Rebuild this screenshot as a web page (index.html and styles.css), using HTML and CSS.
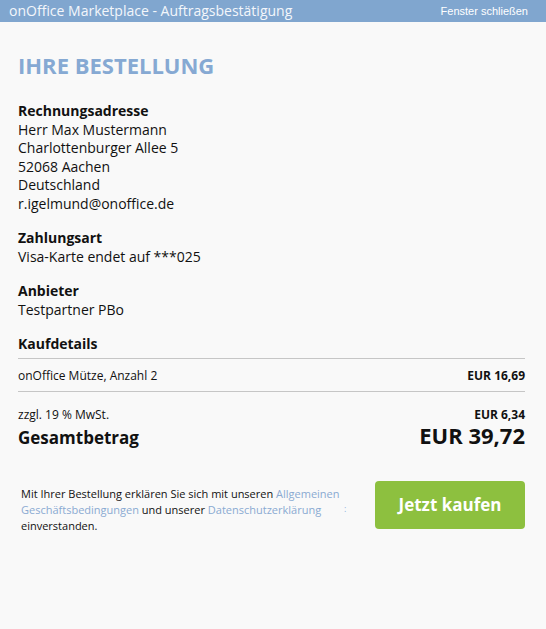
FILE: index.html
```html
<!DOCTYPE html>
<html lang="de">
<head>
<meta charset="utf-8">
<title>onOffice Marketplace - Auftragsbestätigung</title>
<link rel="stylesheet" href="styles.css">
</head>
<body>
<header class="topbar">
  <span class="topbar-title">onOffice Marketplace - Auftragsbestätigung</span>
  <a class="topbar-close" href="#">Fenster schließen</a>
</header>
<main class="content">
  <h1 class="page-title">IHRE BESTELLUNG</h1>

  <section class="block">
    <h2 class="block-title">Rechnungsadresse</h2>
    <p>Herr Max Mustermann<br>Charlottenburger Allee 5<br>52068 Aachen<br>Deutschland<br>r.igelmund@onoffice.de</p>
  </section>

  <section class="block">
    <h2 class="block-title">Zahlungsart</h2>
    <p>Visa-Karte endet auf ***025</p>
  </section>

  <section class="block">
    <h2 class="block-title">Anbieter</h2>
    <p>Testpartner PBo</p>
  </section>

  <section class="details">
    <h2 class="block-title">Kaufdetails</h2>
    <div class="item-row">
      <span>onOffice Mütze, Anzahl 2</span>
      <strong>EUR 16,69</strong>
    </div>
    <div class="tax-row">
      <span>zzgl. 19 % MwSt.</span>
      <strong>EUR 6,34</strong>
    </div>
    <div class="total-row">
      <span>Gesamtbetrag</span>
      <span>EUR 39,72</span>
    </div>
  </section>

  <section class="checkout">
    <p class="terms">Mit Ihrer Bestellung erklären Sie sich mit unseren <a href="#">Allgemeinen Geschäftsbedingungen</a> und unserer <a href="#">Datenschutzerklärung</a> einverstanden.<span class="stray">:</span></p>
    <button class="buy" type="button">Jetzt kaufen</button>
  </section>
</main>
</body>
</html>
```
FILE: styles.css
```css
html, body {
  margin: 0;
  padding: 0;
  background: #f9f9f9;
}
body {
  font-family: "Open Sans", "Liberation Sans", sans-serif;
  color: #111;
  width: 546px;
  height: 629px;
  overflow: hidden;
}
.topbar {
  height: 22px;
  background: #80a6cf;
  display: flex;
  align-items: center;
  justify-content: space-between;
  padding: 0 18px 0 9px;
}
.topbar-title {
  color: #f3f6fb;
  font-size: 14px;
  line-height: 22px;
}
.topbar-close {
  color: #ffffff;
  font-family: "Liberation Sans", Arial, sans-serif;
  font-size: 11px;
  text-decoration: none;
}
.content {
  padding: 0 21px 0 18px;
}
.page-title {
  margin: 30px 0 0;
  font-size: 22px;
  line-height: 26px;
  font-weight: 700;
  color: #86a9d3;
}
.block {
  margin-top: 24px;
  font-size: 14px;
  line-height: 18.5px;
}
.block + .block {
  margin-top: 16px;
}
.block p {
  margin: 0;
}
.block-title {
  margin: 0;
  font-size: 14px;
  line-height: 18.5px;
  font-weight: 700;
}
.details {
  margin-top: 16px;
}
.details .block-title {
  padding-bottom: 4px;
  border-bottom: 1px solid #c6c6c6;
}
.item-row {
  display: flex;
  justify-content: space-between;
  font-size: 12px;
  line-height: 16px;
  padding: 9px 0 7px;
  border-bottom: 1px solid #c6c6c6;
}
.item-row strong, .tax-row strong {
  font-weight: 700;
}
.tax-row {
  display: flex;
  justify-content: space-between;
  font-size: 12px;
  line-height: 16px;
  margin-top: 15px;
}
.total-row {
  display: flex;
  justify-content: space-between;
  align-items: baseline;
  font-weight: 700;
  font-size: 17px;
  line-height: 24px;
}
.total-row span:last-child {
  font-size: 22px;
}
.checkout {
  margin-top: 31px;
  display: flex;
  justify-content: space-between;
  align-items: flex-start;
}
.terms {
  position: relative;
  margin: 5px 0 0 3px;
  width: 325px;
  font-size: 11px;
  line-height: 16px;
  color: #111;
}
.terms a {
  color: #8aaad2;
  text-decoration: none;
}
.stray {
  position: absolute;
  left: 323px;
  top: 15px;
  color: #8fb3dd;
  font-size: 9px;
}
.buy {
  width: 150px;
  height: 48px;
  border: 0;
  border-radius: 4px;
  background: #8dc03f;
  color: #ffffff;
  font-family: "Open Sans", sans-serif;
  font-size: 17px;
  font-weight: 700;
  cursor: pointer;
}
```
